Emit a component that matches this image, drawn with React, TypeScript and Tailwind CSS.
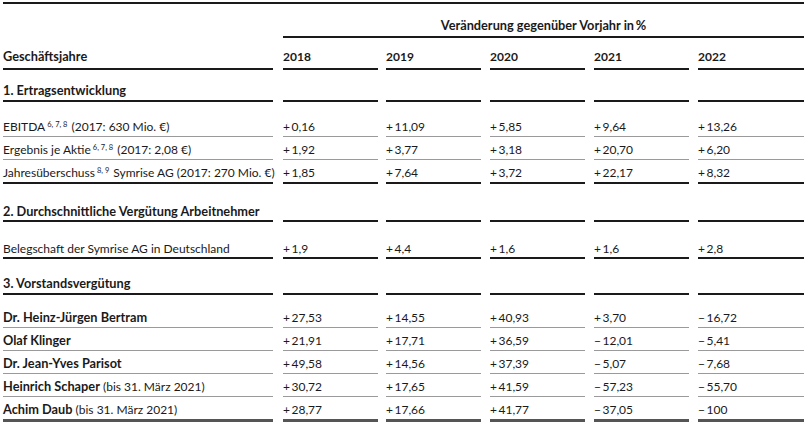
import React from "react";

const W = [
  "w-[270px]",
  "ml-[10px] w-[95px]",
  "ml-[8px] w-[95px]",
  "ml-[9px] w-[95px]",
  "ml-[9px] w-[95px]",
  "ml-[9px] w-[106px]",
];

type RowProps = {
  cells: React.ReactNode[];
  pt: string;
  border: string;
  pb?: string;
  bold?: boolean;
};

function Row({ cells, pt, border, pb = "pb-[1px]", bold }: RowProps) {
  return (
    <div className={`flex pl-[3px] ${bold ? "font-bold" : ""}`}>
      {W.map((w, i) => (
        <div key={i} className={`${w} ${pt} ${pb} ${border} h-auto leading-4 whitespace-nowrap`}>
          <div className="h-4 leading-4">{cells[i] ?? ""}</div>
        </div>
      ))}
    </div>
  );
}

const B = ({ children }: { children: React.ReactNode }) => (
  <span className="font-bold text-[12.75px] leading-none">{children}</span>
);

const Sup = ({ t }: { t: string }) => (
  <sup className="text-[7.5px] leading-none relative top-[1px] ml-[2px] mr-[1px] align-super">{t}</sup>
);

const p = (v: string) => "+\u2009" + v;
const m = (v: string) => "\u2212\u2009" + v;

const THIN = "border-b border-[#9a9a9a]";
const THICK = "border-b-2 border-[#1a1a1a]";
const BOTTOM = "border-b-[3px] border-[#555555]";

export default function App() {
  return (
    <div
      className="w-[804px] h-[431px] bg-white text-[#1a1a1a] text-[12px] overflow-hidden"
      style={{ fontFamily: "Lato, 'Open Sans', sans-serif" }}
    >
      <div className="ml-[3px] mt-[2px] h-[2px] bg-[#1a1a1a]" />
      <div className="flex pl-[3px]">
        <div className="w-[270px]" />
        <div className="ml-[10px] flex-1 pt-[14px] pb-[2px] border-b-2 border-[#1a1a1a] text-center">
          <div className="h-4 leading-4">
            <B>Veränderung gegenüber Vorjahr in{"\u2009"}%</B>
          </div>
        </div>
      </div>
      <Row
        bold
        pt="pt-[11px]"
        pb="pb-[3px]"
        border={THICK}
        cells={[<B>Geschäftsjahre</B>, "2018", "2019", "2020", "2021", "2022"]}
      />
      <Row pt="pt-[13px]" border={THICK} cells={[<B>1. Ertragsentwicklung</B>]} />
      <Row
        pt="pt-[17px]"
        border={THIN}
        cells={[
          <span>
            EBITDA<Sup t="6, 7, 8" /> (2017: 630 Mio. €)
          </span>,
          p("0,16"),
          p("11,09"),
          p("5,85"),
          p("9,64"),
          p("13,26"),
        ]}
      />
      <Row
        pt="pt-[5px]"
        border={THIN}
        cells={[
          <span>
            Ergebnis je Aktie<Sup t="6, 7, 8" /> (2017: 2,08 €)
          </span>,
          p("1,92"),
          p("3,77"),
          p("3,18"),
          p("20,70"),
          p("6,20"),
        ]}
      />
      <Row
        pt="pt-[5px]"
        border={THICK}
        cells={[
          <span>
            Jahresüberschuss<Sup t="8, 9" /> Symrise AG (2017: 270 Mio. €)
          </span>,
          p("1,85"),
          p("7,64"),
          p("3,72"),
          p("22,17"),
          p("8,32"),
        ]}
      />
      <Row pt="pt-[20px]" pb="pb-0" border={THICK} cells={[<B>2. Durchschnittliche Vergütung Arbeitnehmer</B>]} />
      <Row
        pt="pt-[19px]"
        pb="pb-0"
        border={THICK}
        cells={["Belegschaft der Symrise AG in Deutschland", p("1,9"), p("4,4"), p("1,6"), p("1,6"), p("2,8")]}
      />
      <Row pt="pt-[17px]" border={THICK} cells={[<B>3. Vorstandsvergütung</B>]} />
      <Row
        pt="pt-[15px]"
        border={THIN}
        cells={[<B>Dr. Heinz-Jürgen Bertram</B>, p("27,53"), p("14,55"), p("40,93"), p("3,70"), m("16,72")]}
      />
      <Row
        pt="pt-[5px]"
        border={THIN}
        cells={[<B>Olaf Klinger</B>, p("21,91"), p("17,71"), p("36,59"), m("12,01"), m("5,41")]}
      />
      <Row
        pt="pt-[5px]"
        border={THIN}
        cells={[<B>Dr. Jean-Yves Parisot</B>, p("49,58"), p("14,56"), p("37,39"), m("5,07"), m("7,68")]}
      />
      <Row
        pt="pt-[5px]"
        border={THIN}
        cells={[
          <span>
            <B>Heinrich Schaper</B> (bis 31. März 2021)
          </span>,
          p("30,72"),
          p("17,65"),
          p("41,59"),
          m("57,23"),
          m("55,70"),
        ]}
      />
      <Row
        pt="pt-[5px]"
        border={BOTTOM}
        cells={[
          <span>
            <B>Achim Daub</B> (bis 31. März 2021)
          </span>,
          p("28,77"),
          p("17,66"),
          p("41,77"),
          m("37,05"),
          "\u2212\u2009100",
        ]}
      />
    </div>
  );
}
